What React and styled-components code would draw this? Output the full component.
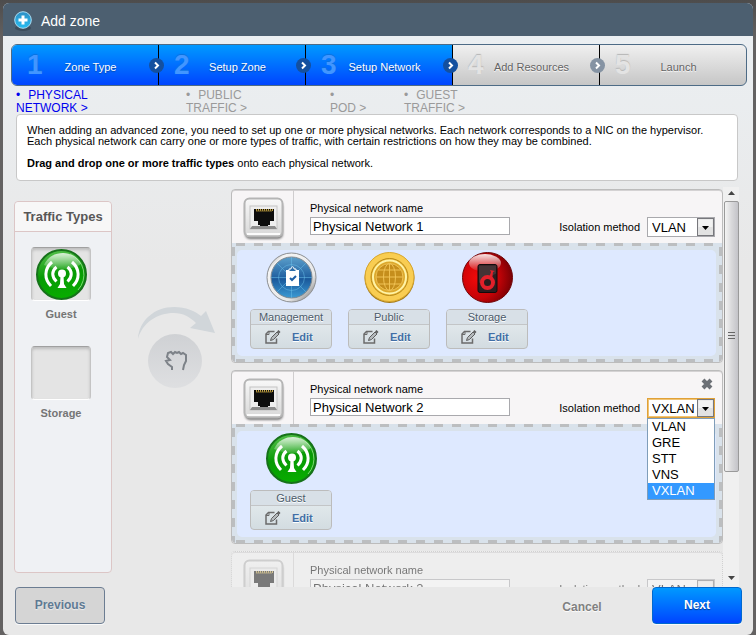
import React, { useState } from "react";
import styled, { createGlobalStyle, css } from "styled-components";

const GlobalStyle = createGlobalStyle`
  * { box-sizing: border-box; }
  body {
    margin: 0;
    background: #646262;
    font-family: "Liberation Sans", Arial, sans-serif;
    font-size: 11px;
    color: #000;
  }
  button, input, select { font-family: inherit; }
  ul, ol, h1, h2, p { margin: 0; padding: 0; list-style: none; }
`;

const Page = styled.div`
  height: 100vh;
  padding: 3px 3px 0;
  background: linear-gradient(#4d4c4c, #646262 40px);
`;

const Dialog = styled.main`
  display: flex;
  flex-direction: column;
  height: 100%;
  border-radius: 6px;
  overflow: hidden;
  background: linear-gradient(#ebeff2 33px, #e8e8e8 260px);
`;

const Header = styled.header`
  display: flex;
  align-items: center;
  gap: 8px;
  height: 33px;
  flex: none;
  padding: 2px 10px 0;
  background: #4c5f70;
`;

const Title = styled.h1`
  font-size: 14px;
  font-weight: normal;
  color: #fff;
`;

const Steps = styled.ol`
  display: flex;
  flex: none;
  height: 42px;
  margin: 8px 6px 0 8px;
  border: 1px solid #4d6b86;
  border-radius: 6px;
  background: linear-gradient(#f0f0f0, #c6c6c6);
`;

const Step = styled.li`
  position: relative;
  display: flex;
  align-items: center;
  flex: 1;
  padding-left: 15px;
  color: #636363;
  text-shadow: 0 1px 1px #fff;
  & + & { border-left: 1px solid #000; }
  &:first-child { border-radius: 5px 0 0 5px; }
  ${(p) => p.$active && css`
    color: #fff;
    text-shadow: 0 1px 1px #0049a8;
    background: linear-gradient(#0099ff, #0045ff);
  `}
`;

const StepNumber = styled.span`
  width: 16px;
  font-size: 28px;
  font-weight: bold;
  color: ${(p) => (p.$active ? "#4296ff" : "#e3e3e3")};
  text-shadow: 0 -1px 1px ${(p) => (p.$active ? "#0a72de" : "#b5b5b5")};
`;

const StepLabel = styled.span`
  flex: 1;
  padding: 4px 20px 0 0;
  text-align: center;
`;

const StepArrow = styled.svg`
  position: absolute;
  right: -6px;
  top: 13px;
  z-index: 1;
`;

const SubSteps = styled.ol`
  display: grid;
  grid-template-columns: 170px 144px 74px 90px;
  flex: none;
  height: 28px;
  padding: 3px 0 0 13px;
  font-size: 12px;
  line-height: 13px;
`;

const SubStep = styled.li`
  color: ${(p) => (p.$active ? "#0000ee" : "#9a9a9a")};
  &::before { content: "•"; margin-right: 8px; }
  span { display: block; }
`;

const Info = styled.section`
  flex: none;
  margin: 0 15px 0 13px;
  padding: 10px 10px 11px;
  border: 1px solid #c8c8c8;
  border-radius: 4px;
  background: #fff;
  line-height: 11px;
  p + p { margin-top: 11px; }
`;

const Content = styled.div`
  display: flex;
  flex: 1;
  min-height: 0;
  margin: 6px 14px 0 11px;
`;

const TrafficPanel = styled.section`
  flex: none;
  width: 98px;
  margin: 14px 0;
  border: 1px solid #dcc6c6;
  border-radius: 4px;
  background: #eff1f4;
`;

const PanelTitle = styled.h2`
  padding: 7px 0;
  border-bottom: 1px solid #dcc6c6;
  border-radius: 4px 4px 0 0;
  background: #f7f7f7;
  font-size: 13px;
  line-height: 15px;
  text-align: center;
  color: #575757;
`;

const TrafficList = styled.ul`
  display: flex;
  flex-direction: column;
  align-items: center;
  gap: 26px;
  padding: 15px 4px 0 0;
`;

const TrafficType = styled.li`
  font-weight: bold;
  line-height: 12px;
  text-align: center;
  color: #757575;
`;

const Slot = styled.div`
  display: flex;
  align-items: center;
  justify-content: center;
  width: 60px;
  height: 54px;
  margin-bottom: 7px;
  border: 1px solid #c4c4c4;
  border-top-color: #a0a0a0;
  border-bottom-color: #fff;
  border-radius: 4px;
  background: #e4e4e4;
  box-shadow: inset 0 2px 3px #bcbcbc;
`;

const DragHint = styled.div`
  flex: none;
  width: 119px;
  padding: 116px 0 0 23px;
`;

const Networks = styled.section`
  display: flex;
  flex-direction: column;
  gap: 7px;
  flex: 1;
  min-width: 0;
  padding-top: 2px;
  overflow-y: auto;
  scrollbar-width: none;
`;

const Card = styled.article`
  position: relative;
  flex: none;
  border: 1px solid #bcbcbc;
  border-radius: 4px;
  background: #f7f5f6;
  box-shadow: inset 0 1px 0 #d4d2d3;
  ${(p) => p.$ghost && css`
    border-style: dotted;
    background: #f4f4f4;
    opacity: 0.5;
  `}
`;

const CardHead = styled.div`
  display: flex;
  height: 53px;
`;

const PortCell = styled.div`
  width: 62px;
  padding: 6px 0 0 10px;
  border-right: 1px solid #cfcdce;
`;

const NameField = styled.div`
  display: flex;
  flex-direction: column;
  flex: 1;
  gap: 2px;
  padding: 12px 0 0 16px;
  line-height: 13px;
`;

const NameInput = styled.input`
  width: 200px;
  height: 18px;
  padding: 0 2px;
  border: 1px solid #a9a9ad;
  background: #fff;
  font-size: 13px;
`;

const MethodField = styled.div`
  display: flex;
  align-items: center;
  align-self: flex-start;
  gap: 7px;
  padding: 27px 7px 0 0;
`;

const SelectBox = styled.div`
  position: relative;
  width: 68px;
`;

const Select = styled.select`
  display: block;
  width: 100%;
  height: 20px;
  padding: 0 18px 0 4px;
  appearance: none;
  border: 1px solid ${(p) => (p.$open ? "#e0a137" : "#a9a9ad")};
  border-radius: 0;
  outline: ${(p) => (p.$open ? "1px solid #f0c374" : "none")};
  outline-offset: -2px;
  background: #fff;
  font-size: 13px;
  color: #000;
`;

const SelectArrow = styled.svg`
  position: absolute;
  right: 1px;
  top: 1px;
  pointer-events: none;
`;

const Options = styled.ul`
  position: absolute;
  z-index: 2;
  top: 20px;
  left: 0;
  right: 0;
  border: 1px solid #7f9db9;
  background: #fff;
  font-size: 13px;
  line-height: 16px;
`;

const Option = styled.li`
  padding-left: 4px;
  color: ${(p) => (p.$selected ? "#fff" : "#000")};
  background: ${(p) => (p.$selected ? "#3399ff" : "transparent")};
`;

const CloseButton = styled.button`
  position: absolute;
  top: 7px;
  right: 9px;
  display: flex;
  padding: 0;
  border: 0;
  background: none;
`;

const dash = (dir) =>
  `repeating-linear-gradient(${dir}, transparent 0 4px, #bcbec0 4px 13px, transparent 13px 18px)`;

const DropZone = styled.div`
  height: 119px;
  padding: 7px 6px 6px 5px;
  border-radius: 0 0 4px 4px;
  background:
    ${dash("to right")} top / 100% 3px no-repeat,
    ${dash("to right")} bottom / 100% 3px no-repeat,
    ${dash("to bottom")} left / 3px 100% no-repeat,
    ${dash("to bottom")} right / 3px 100% no-repeat,
    #d9e2eb;
`;

const ZoneItems = styled.ul`
  display: flex;
  gap: 16px;
  height: 106px;
  padding: 2px 13px 0;
  border-radius: 5px;
  background: #dee9ff;
`;

const ZoneItem = styled.li`
  display: flex;
  flex-direction: column;
  align-items: center;
  gap: 6px;
`;

const EditBox = styled.div`
  width: 82px;
  border: 1px solid #bcbcbc;
  border-radius: 4px;
  overflow: hidden;
  background: linear-gradient(#e9eff1, #d3dce1);
`;

const EditName = styled.div`
  height: 15px;
  border-bottom: 1px solid #c3c5c7;
  background: #d8e0e7;
  line-height: 15px;
  text-align: center;
  color: #4c5b6a;
  text-shadow: 0 1px 0 #fff;
`;

const EditButton = styled.button`
  display: flex;
  align-items: center;
  gap: 11px;
  width: 100%;
  height: 23px;
  padding: 0 0 0 14px;
  border: 0;
  background: none;
  font-size: 11px;
  font-weight: bold;
  color: #416ea5;
  text-shadow: 0 1px 0 #fff;
`;

const ScrollBar = styled.div`
  display: flex;
  flex-direction: column;
  align-items: center;
  flex: none;
  width: 16px;
  padding: 0 0 4px;
  background: #f0f0f0;
`;

const ScrollButton = styled.button`
  display: flex;
  align-items: center;
  justify-content: center;
  width: 15px;
  height: 11px;
  padding: 0;
  border: 0;
  background: none;
`;

const ScrollTrack = styled.div`
  flex: 1;
  width: 15px;
  padding-top: 3px;
`;

const ScrollThumb = styled.div`
  display: flex;
  align-items: center;
  justify-content: center;
  height: 73%;
  border: 1px solid #9a9a9a;
  border-radius: 2px;
  background: linear-gradient(to right, #f4f4f4, #d9d9db 50%, #c3c3c8);
`;

const Footer = styled.footer`
  display: flex;
  align-items: center;
  flex: none;
  padding: 0 11px 11px 12px;
`;

const FooterButton = styled.button`
  width: 90px;
  height: 37px;
  padding: 0 0 2px;
  border-radius: 4px;
  font-size: 12px;
  font-weight: bold;
  ${(p) => p.$kind === "previous" && css`
    margin-right: auto;
    border: 1px solid #6c7d92;
    background: #d5d5d5;
    color: #5f7a93;
    text-shadow: 0 1px 1px #eee;
    box-shadow: 0 1px 0 #fafafa;
  `}
  ${(p) => p.$kind === "cancel" && css`
    margin-right: 25px;
    padding: 2px 0 0;
    border: 0;
    background: none;
    color: #808080;
    text-shadow: 0 1px 1px #fff;
  `}
  ${(p) => p.$kind === "next" && css`
    border: 1px solid #0069cf;
    background: linear-gradient(#0099ff, #0045ff);
    color: #fff;
    text-shadow: 0 1px 1px #003a8c;
    box-shadow: 0 1px 0 #fafafa;
  `}
`;

function AddIcon() {
  return (
    <svg width="20" height="20" viewBox="0 0 20 20" aria-hidden="true">
      <defs>
        <linearGradient id="add" x1="0" y1="0" x2="0" y2="1">
          <stop offset="0" stopColor="#2f8fc4" />
          <stop offset="1" stopColor="#27bdf2" />
        </linearGradient>
      </defs>
      <ellipse cx="10" cy="17" rx="8" ry="3" fill="#3c4d5c" />
      <circle cx="10" cy="9" r="8.3" fill="url(#add)" stroke="#a9dcf3" />
      <path d="M10 4.5v9M5.500 9h9" stroke="#fff" strokeWidth="3" />
    </svg>
  );
}

function Arrow({ active }) {
  return (
    <StepArrow width="15" height="15" viewBox="0 0 15 15" aria-hidden="true">
      <circle cx="7.500" cy="7.500" r="7.500" fill={active ? "#14509f" : "#8593a3"} />
      <path d="M6 4.500l3 3-3 3" fill="none" stroke="#fff" strokeWidth="2" />
    </StepArrow>
  );
}

function GuestIcon() {
  return (
    <svg width="51" height="51" viewBox="0 0 51 51" aria-hidden="true">
      <defs>
        <linearGradient id="green" x1="0.300" y1="0" x2="0.500" y2="1">
          <stop offset="0" stopColor="#55c04c" />
          <stop offset="0.500" stopColor="#079a04" />
          <stop offset="1" stopColor="#08ad00" />
        </linearGradient>
        <linearGradient id="greenShine" x1="0" y1="0" x2="0" y2="1">
          <stop offset="0" stopColor="#fff" stopOpacity="0.800" />
          <stop offset="1" stopColor="#fff" stopOpacity="0.100" />
        </linearGradient>
      </defs>
      <circle cx="25.500" cy="25.500" r="24.500" fill="url(#green)" stroke="#16721a" strokeWidth="2" />
      <path d="M34 5a22.500 22.500 0 0 1 8 36" fill="none" stroke="#9be093" strokeOpacity="0.800" />
      <path d="M8 16C12 7 20 4 27 4s15 4 18 11c-8 6-25 7-37 1z" fill="url(#greenShine)" />
      <g fill="none" stroke="#fff" strokeWidth="3">
        <path d="M20.500 18c-5 4-5 10 0 14.500M31.500 18c5 4 5 10 0 14.500" />
        <path d="M16 13c-8 7-8 17-1 24M36 13c8 7 8 17 1 24" />
      </g>
      <circle cx="26" cy="24.500" r="4" fill="#fff" />
      <path d="M24.500 27h3l.5 8 2.500 4h-9l2.500-4z" fill="#fff" />
    </svg>
  );
}

function ManagementIcon() {
  return (
    <svg width="51" height="51" viewBox="0 0 51 51" aria-hidden="true">
      <defs>
        <linearGradient id="ring" x1="0" y1="0" x2="1" y2="1">
          <stop offset="0" stopColor="#777" />
          <stop offset="0.200" stopColor="#f4f4f4" />
          <stop offset="0.700" stopColor="#e8e8e8" />
          <stop offset="1" stopColor="#666" />
        </linearGradient>
        <linearGradient id="radar" x1="0" y1="0" x2="0" y2="1">
          <stop offset="0" stopColor="#5b9fcb" />
          <stop offset="0.550" stopColor="#1b5a9c" />
          <stop offset="1" stopColor="#3c9bd4" />
        </linearGradient>
      </defs>
      <circle cx="25.500" cy="25.500" r="24.500" fill="url(#ring)" stroke="#8c8f92" />
      <circle cx="25.500" cy="25.500" r="20.500" fill="url(#radar)" stroke="#7c8790" />
      <g fill="none" stroke="#69c0ea" strokeOpacity="0.500">
        <circle cx="25.500" cy="25.500" r="13" />
        <path d="M25.500 5v41M5 25.500h41M11 11l29 29M40 11L11 40" />
      </g>
      <path d="M20 18h13v16H20z" fill="#fff" />
      <path d="M23 19v-2h2c0-3 3-3 3 0h2v2" fill="#2d6da8" stroke="#fff" />
      <path d="M24 26l2 2 4-4" fill="none" stroke="#1c5ea4" strokeWidth="2" />
    </svg>
  );
}

function PublicIcon() {
  return (
    <svg width="53" height="51" viewBox="0 1 53 51" aria-hidden="true">
      <circle cx="26.500" cy="27" r="25" fill="#a47a17" />
      <circle cx="26.500" cy="26" r="24.500" fill="#f9cd52" stroke="#d7a62e" />
      <circle cx="26.500" cy="26" r="18.500" fill="#e6b331" stroke="#b98a19" />
      <circle cx="26.500" cy="26" r="16.500" fill="#dca82c" stroke="#fff3a6" strokeWidth="2" />
      <g fill="none" stroke="#f0c254">
        <circle cx="26.500" cy="26" r="13.500" fill="#c58e1c" />
        <ellipse cx="26.500" cy="26" rx="6" ry="13.500" />
        <path d="M26.500 12.500v27M13 26h27M15.500 19h22M15.500 33h22" />
      </g>
    </svg>
  );
}

function StorageIcon() {
  return (
    <svg width="51" height="51" viewBox="0 0 51 51" aria-hidden="true">
      <defs>
        <radialGradient id="red" cx="0.300" cy="0.500" r="0.700">
          <stop offset="0" stopColor="#f10a0a" />
          <stop offset="0.600" stopColor="#c50307" />
          <stop offset="1" stopColor="#780004" />
        </radialGradient>
        <linearGradient id="redShine" x1="0" y1="0" x2="0" y2="1">
          <stop offset="0" stopColor="#fff" stopOpacity="0.900" />
          <stop offset="1" stopColor="#fff" stopOpacity="0" />
        </linearGradient>
      </defs>
      <circle cx="25.500" cy="25.500" r="25" fill="url(#red)" stroke="#6f0508" />
      <ellipse cx="23" cy="11" rx="16" ry="9" fill="url(#redShine)" />
      <rect x="16" y="12.500" width="19" height="28" rx="2" fill="#2b1d1f" stroke="#120b0c" />
      <path d="M17 13.500h17v8L17 31z" fill="#5b4a4c" fillOpacity="0.500" />
      <circle cx="25.500" cy="30.500" r="5.500" fill="none" stroke="#e2202a" strokeWidth="4" />
      <path d="M27 26l2-6-1-2 5 1-2 1-1 8z" fill="#e2202a" />
    </svg>
  );
}

function PortIcon() {
  return (
    <svg width="44" height="46" viewBox="0 0 44 46" aria-hidden="true">
      <defs>
        <linearGradient id="plate" x1="0" y1="0" x2="0" y2="1">
          <stop offset="0" stopColor="#f8f8f8" />
          <stop offset="1" stopColor="#d8d8d8" />
        </linearGradient>
        <filter id="soft" x="-20%" y="-20%" width="140%" height="140%">
          <feGaussianBlur stdDeviation="1" />
        </filter>
      </defs>
      <rect x="3" y="6" width="38" height="37" rx="5" fill="#777" filter="url(#soft)" />
      <rect x="2.500" y="2.500" width="38" height="38" rx="5" fill="url(#plate)" stroke="#b5b5b5" strokeWidth="2" />
      <path d="M5 38h33" stroke="#fbfbfb" strokeWidth="2" />
      <rect x="8" y="10" width="27" height="23" fill="#eee" stroke="#c4c4c4" />
      <path d="M8 33h27l-2-3H10z" fill="#8d8d8d" />
      <path d="M12 13h20v12h-4v4h-2v1h-8v-1h-2v-4h-4z" fill="#0d0d0d" />
      <path d="M14 14h17" stroke="#c3a345" strokeWidth="2" strokeDasharray="1 1" />
      <path d="M14 15h16" stroke="#8c752f" />
    </svg>
  );
}

function EditIcon() {
  return (
    <svg width="16" height="14" viewBox="0 0 16 14" fill="none" aria-hidden="true">
      <path d="M9.500 1.500h-6L1 4v9h10.500V8.500" stroke="#6b6b6b" strokeWidth="1.500" />
      <path d="M1 4.500h3v-3" stroke="#6b6b6b" />
      <path d="M5.500 10.500l1-3 5.500-5.500 2 2-5.500 5.500z" fill="#b4b9bc" stroke="#5e5e5e" />
      <path d="M12 1.500L13.500 0l2 2L14 3.500z" fill="#5e5e5e" />
    </svg>
  );
}

function DragDrawing() {
  return (
    <svg width="84" height="90" viewBox="0 0 84 90" aria-hidden="true">
      <defs>
        <linearGradient id="disc" x1="0" y1="0" x2="0" y2="1">
          <stop offset="0" stopColor="#cfd1d4" />
          <stop offset="1" stopColor="#dedfe1" />
        </linearGradient>
      </defs>
      <path d="M3 36C4 17 20 4 39 4c12 0 21 4 27 9l5-5 9 22-25-5 6-5c-6-6-13-10-22-10C22 10 7 20 3 36z" fill="#d1d6da" />
      <circle cx="40" cy="58" r="27" fill="url(#disc)" />
      <path
        d="M37 67v-3l-4-3-2-3 4-1-3-3 1-4 3-1 2 2 2-2 2 1 2-1 2 2 2-1 3 2v6l-2 4-1 5"
        fill="none"
        stroke="#7d8288"
        strokeWidth="2"
      />
    </svg>
  );
}

const TRAFFIC_ICONS = {
  Guest: GuestIcon,
  Management: ManagementIcon,
  Public: PublicIcon,
  Storage: StorageIcon,
};
const METHODS = ["VLAN", "GRE", "STT", "VNS", "VXLAN"];
const STEPS = ["Zone Type", "Setup Zone", "Setup Network", "Add Resources", "Launch"];
const SUB_STEPS = [
  ["PHYSICAL", "NETWORK >"],
  ["PUBLIC", "TRAFFIC >"],
  ["", "POD >"],
  ["GUEST", "TRAFFIC >"],
];

function NetworkCard({ id, traffic, initialMethod, initiallyOpen, removable, ghost }) {
  const [name, setName] = useState(`Physical Network ${id}`);
  const [method, setMethod] = useState(initialMethod);
  const [open, setOpen] = useState(initiallyOpen);
  return (
    <Card $ghost={ghost}>
      {removable && (
        <CloseButton aria-label="Remove network">
          <svg width="12" height="12" viewBox="0 0 12 12">
            <path d="M2 2l8 8M10 2l-8 8" stroke="#6c7076" strokeWidth="4" />
          </svg>
        </CloseButton>
      )}
      <CardHead>
        <PortCell><PortIcon /></PortCell>
        <NameField>
          <label htmlFor={`name-${id}`}>Physical network name</label>
          <NameInput id={`name-${id}`} value={name} onChange={(e) => setName(e.target.value)} />
        </NameField>
        <MethodField>
          <label htmlFor={`method-${id}`}>Isolation method</label>
          <SelectBox>
            <Select
              id={`method-${id}`}
              $open={open}
              value={method}
              onChange={(e) => setMethod(e.target.value)}
            >
              {METHODS.map((m) => <option key={m}>{m}</option>)}
            </Select>
            <SelectArrow width="17" height="18" viewBox="0 0 17 18" aria-hidden="true">
              <rect x="0.500" y="0.500" width="16" height="17" fill="#e2e2e2" stroke="#77777c" />
              <path d="M1.500 9V1.500h14V9z" fill="#f2f2f2" />
              <path d="M5 8h7l-3.500 4z" fill="#000" />
            </SelectArrow>
            {open && (
              <Options role="listbox" aria-label="Isolation method">
                {METHODS.map((m) => (
                  <Option
                    key={m}
                    role="option"
                    aria-selected={m === method}
                    $selected={m === method}
                    onClick={() => { setMethod(m); setOpen(false); }}
                  >
                    {m}
                  </Option>
                ))}
              </Options>
            )}
          </SelectBox>
        </MethodField>
      </CardHead>
      <DropZone>
        <ZoneItems>
          {traffic.map((t) => {
            const Icon = TRAFFIC_ICONS[t];
            return (
              <ZoneItem key={t}>
                <Icon />
                <EditBox>
                  <EditName>{t}</EditName>
                  <EditButton><EditIcon />Edit</EditButton>
                </EditBox>
              </ZoneItem>
            );
          })}
        </ZoneItems>
      </DropZone>
    </Card>
  );
}

export default function App() {
  return (
    <Page>
      <GlobalStyle />
      <Dialog>
        <Header>
          <AddIcon />
          <Title>Add zone</Title>
        </Header>
        <Steps>
          {STEPS.map((label, i) => (
            <Step key={label} $active={i < 3}>
              <StepNumber $active={i < 3}>{i + 1}</StepNumber>
              <StepLabel>{label}</StepLabel>
              {i < 4 && <Arrow active={i < 3} />}
            </Step>
          ))}
        </Steps>
        <SubSteps>
          {SUB_STEPS.map(([first, second], i) => (
            <SubStep key={i} $active={i === 0}>{first}<span>{second}</span></SubStep>
          ))}
        </SubSteps>
        <Info>
          <p>
            When adding an advanced zone, you need to set up one or more physical networks. Each
            network corresponds to a NIC on the hypervisor. Each physical network can carry one or
            more types of traffic, with certain restrictions on how they may be combined.
          </p>
          <p><b>Drag and drop one or more traffic types</b> onto each physical network.</p>
        </Info>
        <Content>
          <TrafficPanel>
            <PanelTitle>Traffic Types</PanelTitle>
            <TrafficList>
              <TrafficType><Slot><GuestIcon /></Slot>Guest</TrafficType>
              <TrafficType><Slot />Storage</TrafficType>
            </TrafficList>
          </TrafficPanel>
          <DragHint><DragDrawing /></DragHint>
          <Networks>
            <NetworkCard id={1} traffic={["Management", "Public", "Storage"]} initialMethod="VLAN" />
            <NetworkCard id={2} traffic={["Guest"]} initialMethod="VXLAN" initiallyOpen removable />
            <NetworkCard id={3} traffic={[]} initialMethod="VLAN" ghost />
          </Networks>
          <ScrollBar>
            <ScrollButton aria-label="Scroll up">
              <svg width="7" height="4" viewBox="0 0 7 4"><path d="M0 4l3.500-4L7 4z" fill="#444" /></svg>
            </ScrollButton>
            <ScrollTrack>
              <ScrollThumb>
                <svg width="7" height="8" viewBox="0 0 7 8">
                  <path d="M0 .5h7M0 3.500h7M0 6.500h7" stroke="#666" />
                </svg>
              </ScrollThumb>
            </ScrollTrack>
            <ScrollButton aria-label="Scroll down">
              <svg width="7" height="4" viewBox="0 0 7 4"><path d="M0 0l3.500 4L7 0z" fill="#444" /></svg>
            </ScrollButton>
          </ScrollBar>
        </Content>
        <Footer>
          <FooterButton $kind="previous">Previous</FooterButton>
          <FooterButton $kind="cancel">Cancel</FooterButton>
          <FooterButton $kind="next">Next</FooterButton>
        </Footer>
      </Dialog>
    </Page>
  );
}
